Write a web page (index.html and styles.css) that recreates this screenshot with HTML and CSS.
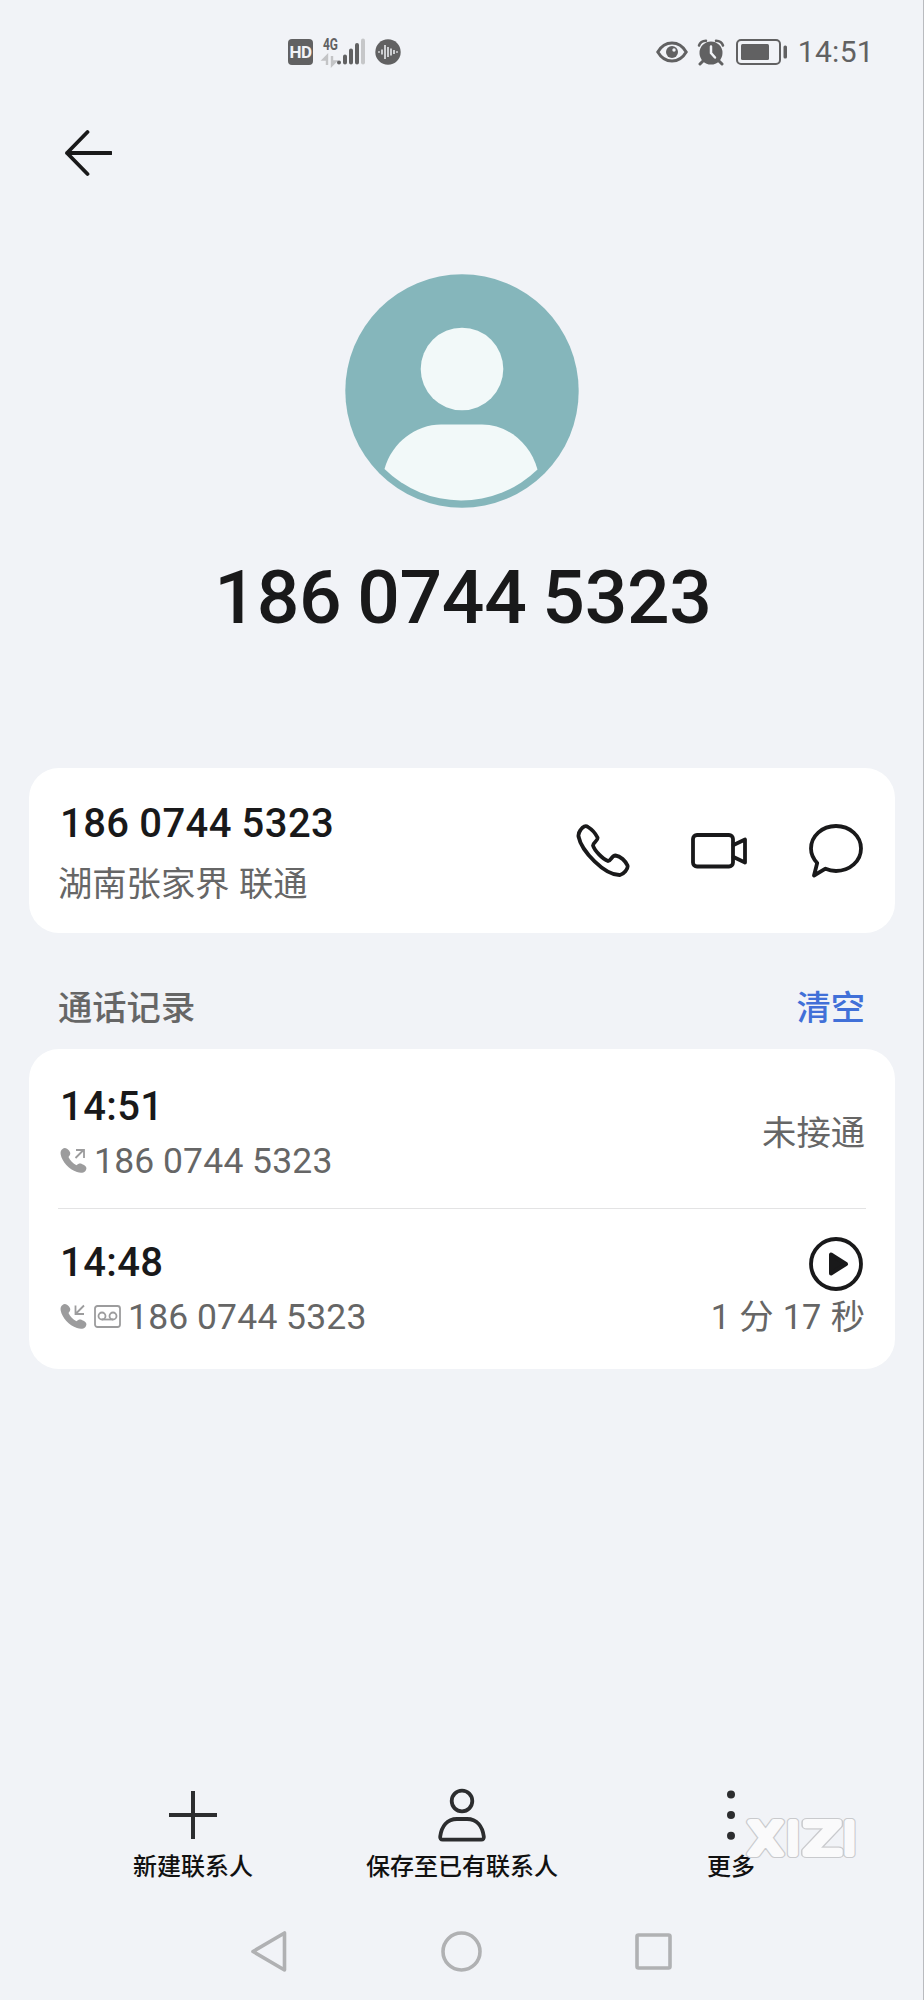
FILE: index.html
```html
<!DOCTYPE html>
<html lang="zh-CN">
<head>
  <meta charset="UTF-8" />
  <meta name="viewport" content="width=device-width, initial-scale=1.0"/>
  <title>联系人详情</title>
  <link rel="stylesheet" href="styles.css">
</head>
<body>
  <!-- 状态栏 -->
  <header class="status">
    <div class="status-left">
      <span class="hd">HD</span>
      <svg class="signal" width="44" height="36" viewBox="0 -3 44 36">
        <text class="net" x="1" y="13" textLength="15" lengthAdjust="spacingAndGlyphs">4G</text>
        <path d="M5 28V19L1.500 22.500H5M10 19v9l3.500-3.500H10" fill="none" stroke="#c3c4c6" stroke-width="2.400"/>
        <g stroke="#616162" stroke-width="4" stroke-linecap="round">
          <path d="M17 25.400v.2M23 19.500v6M29 13.500v12M35 8v17.500"/>
          <path d="M41 3.500v22" stroke="#c6c7c9"/>
        </g>
      </svg>
      <svg class="voice" width="26" height="26" viewBox="0 0 26 26">
        <circle cx="13" cy="13" r="12.700" fill="#616162"/>
        <path d="M4 12.300v1.400M7 10.500v5M10 6v14M13 8v10M16 9.500v7M19 11v4M22 12.300v1.400" stroke="#f1f3f7" stroke-width="1.500"/>
      </svg>
    </div>
    <div class="status-right">
      <svg width="32" height="22" viewBox="0 0 32 22">
        <path d="M1.800 11C5 5.500 10 2 16 2s11 3.500 14.200 9C27 16.500 22 20 16 20S5 16.500 1.800 11z" fill="none" stroke="#616162" stroke-width="3"/>
        <circle cx="16" cy="11" r="6" fill="#616162"/>
        <circle cx="18" cy="9" r="1.700" fill="#f1f3f7"/>
      </svg>
      <svg class="alarm" width="28" height="27" viewBox="0 0 28 27">
        <circle cx="14" cy="14" r="11.500" fill="#616162"/>
        <path d="M2 6.500Q3.500 2 9 1.700M26 6.500Q24.500 2 19 1.700" fill="none" stroke="#616162" stroke-width="2.500" stroke-linecap="round"/>
        <path d="M6 22l-3 3M22 22l3 3" stroke="#616162" stroke-width="3" stroke-linecap="round"/>
        <path d="M14 7.500V14l4 4.500" fill="none" stroke="#f1f3f7" stroke-width="2.500" stroke-linecap="round"/>
      </svg>
      <svg class="battery" width="52" height="26" viewBox="0 0 52 26">
        <rect x="1" y="1" width="43" height="24" rx="4" fill="none" stroke="#616162" stroke-width="2"/>
        <rect x="5" y="5" width="28" height="16" rx="1.500" fill="#616162"/>
        <rect x="47.500" y="6.500" width="3.500" height="13" rx="1.500" fill="#616162"/>
      </svg>
      <span class="clock">14:51</span>
    </div>
  </header>

  <div class="appbar">
    <svg width="48" height="48" viewBox="0 0 48 48">
      <path d="M23.500 3L3 24l20.500 21M3 24h44" class="line"/>
    </svg>
  </div>

  <!-- 头像和号码 -->
  <section class="profile">
    <svg width="234" height="234" viewBox="0 0 234 234">
      <circle cx="117" cy="117" r="116.700" fill="#85b6bb"/>
      <circle cx="117" cy="95" r="41.300" fill="#f2f9f9"/>
      <path d="M39.500 195C47 168 71 150.500 96 150.500h41c25 0 48 18 55.500 45A109.500 109.500 0 0 1 39.500 195z" fill="#f2f9f9"/>
    </svg>
    <h1>186 0744 5323</h1>
  </section>

  <main>
    <section class="card contact">
      <div>
        <div class="number">186 0744 5323</div>
        <div class="place">湖南张家界 联通</div>
      </div>
      <div class="actions">
        <svg width="54" height="54" viewBox="0 0 54 54">
          <path d="M4.500 6C7 2.500 9.500 1.200 12 3c4 2.500 7.500 6.500 9.500 10.500 1 3-4.500 5-4.500 8 1.500 5 9.500 13.500 15 15.500 3 0 3.500-5.500 7.500-5.500 5 .5 10 5.500 12 10 1 3.500-4 8.500-7.500 9.500C28.500 51.500 5.500 27 2.500 12.500c-.3-2.500.5-4.500 2-6.500z" class="line"/>
        </svg>
        <svg width="57" height="36" viewBox="0 0 57 36">
          <rect x="2" y="2" width="40" height="31.500" rx="4" class="line"/>
          <path d="M42.500 12L54 6.500v23L42.500 24" class="line"/>
        </svg>
        <svg width="54" height="54" viewBox="0 0 54 54">
          <path d="M27 2c14 0 25 10 25 22.500S41 47 27 47c-4 0-7-.7-10.500-2.300L5 51.500l3.200-12.500C4 34.500 2 30 2 24.500 2 12 13 2 27 2z" class="line"/>
        </svg>
      </div>
    </section>

    <div class="section-title">
      <span>通话记录</span>
      <a>清空</a>
    </div>

    <section class="card">
      <div class="call first">
        <div>
          <div class="time">14:51</div>
          <div class="detail">
            <svg width="27" height="27" viewBox="0 0 27 27">
              <path d="M2.500 2C4.500.3 7 1 9 3.500c2 2.500 1.700 4-.5 6.500 1.500 3.500 4.500 6.500 8 8.200 2.500-2.500 4.500-2.200 7.500-.2 3 2 3 4 1.200 6.200-2 2-5 2-8.200.8C9 22.500 2 14.500.7 7.500.3 5 .8 3.300 2.500 2z" fill="#9c9c9d"/>
              <path d="M15.500 11l8-8M16 3h8v8" class="arrow"/>
            </svg>
            <span>186 0744 5323</span>
          </div>
        </div>
        <div class="result">未接通</div>
      </div>
      <div class="call">
        <div>
          <div class="time">14:48</div>
          <div class="detail">
            <svg width="27" height="27" viewBox="0 0 27 27">
              <path d="M2.500 2C4.500.3 7 1 9 3.500c2 2.500 1.700 4-.5 6.500 1.500 3.500 4.500 6.500 8 8.200 2.500-2.500 4.500-2.200 7.500-.2 3 2 3 4 1.200 6.200-2 2-5 2-8.200.8C9 22.500 2 14.500.7 7.500.3 5 .8 3.300 2.500 2z" fill="#9c9c9d"/>
              <path d="M24 2.500l-8 8M15.500 2.500v8.500H24" class="arrow"/>
            </svg>
            <svg width="27" height="23" viewBox="0 0 27 23">
              <rect x="1" y="1" width="25" height="21" rx="2.500" class="arrow"/>
              <circle cx="8" cy="11" r="3.500" class="arrow"/>
              <circle cx="19" cy="11" r="3.500" class="arrow"/>
              <path d="M8 14.500h11" class="arrow"/>
            </svg>
            <span>186 0744 5323</span>
          </div>
        </div>
        <div class="result with-play">
          <svg width="54" height="54" viewBox="0 0 54 54">
            <circle cx="27" cy="27" r="25" class="line"/>
            <path d="M22 17.500v19L37 27z" fill="#19191a" stroke="#19191a" stroke-width="4" stroke-linejoin="round"/>
          </svg>
          <div>1 分 17 秒</div>
        </div>
      </div>
    </section>
  </main>

  <footer>
    <div class="toolbar">
      <div class="tool">
        <svg width="54" height="54" viewBox="0 0 54 54"><path d="M27 3v48M3 27h48" stroke="#2c2d2f" stroke-width="4"/></svg>
        <span>新建联系人</span>
      </div>
      <div class="tool">
        <svg width="54" height="54" viewBox="0 0 54 54">
          <g fill="none" stroke="#2c2d2f" stroke-width="3.800">
            <circle cx="27" cy="13" r="10.300"/>
            <path d="M22 31h10c10 0 15.500 7.500 16.800 17.500.3 2-.7 3.200-2.500 3.200H7.700c-1.800 0-2.800-1.200-2.500-3.200C6.500 38.500 12 31 22 31z"/>
          </g>
        </svg>
        <span>保存至已有联系人</span>
      </div>
      <div class="tool">
        <svg width="54" height="54" viewBox="0 0 54 54" fill="#2c2d2f">
          <circle cx="27" cy="6.500" r="4"/><circle cx="27" cy="27" r="4"/><circle cx="27" cy="47.800" r="4"/>
        </svg>
        <span>更多</span>
      </div>
    </div>
    <!-- 系统导航键 -->
    <div class="nav">
      <svg width="42" height="42" viewBox="0 0 42 42"><path d="M35.500 3v37L4 21.500z"/></svg>
      <svg width="42" height="42" viewBox="0 0 42 42"><circle cx="20.500" cy="21.500" r="18.500"/></svg>
      <svg width="42" height="42" viewBox="0 0 42 42"><rect x="4" y="5" width="33" height="33" rx="1.500"/></svg>
    </div>
  </footer>

  <svg class="watermark" width="124" height="54" viewBox="0 0 124 54">
    <g class="wm-edge">
      <text x="8" y="42" textLength="33" lengthAdjust="spacingAndGlyphs">X</text>
      <text x="46" y="42">I</text>
      <text x="63" y="42" textLength="37" lengthAdjust="spacingAndGlyphs">Z</text>
      <text x="102.500" y="42">I</text>
    </g>
    <g class="wm-fill">
      <text x="8" y="42" textLength="33" lengthAdjust="spacingAndGlyphs">X</text>
      <text x="46" y="42">I</text>
      <text x="63" y="42" textLength="37" lengthAdjust="spacingAndGlyphs">Z</text>
      <text x="102.500" y="42">I</text>
    </g>
  </svg>
</body>
</html>
```

FILE: styles.css
```css
* {
  box-sizing: border-box;
}

html, body {
  margin: 0;
  padding: 0;
}

body {
  position: relative;
  display: flex;
  flex-direction: column;
  width: 924px;
  height: 2000px;
  overflow: hidden;
  background: #f1f3f7;
  box-shadow: inset -1px 0 #b9bbbf;
  color: #19191a;
  font-family: Roboto, "Noto Sans CJK SC", sans-serif;
}

svg {
  display: block;
  flex: none;
}

.line {
  fill: none;
  stroke: #19191a;
  stroke-width: 3.8;
  stroke-linecap: round;
  stroke-linejoin: round;
}

.arrow {
  fill: none;
  stroke: #9c9c9d;
  stroke-width: 1.8;
}

/* 状态栏 */
.status {
  display: flex;
  justify-content: space-between;
  align-items: center;
  height: 104px;
  padding: 0 50px 0 288px;
  color: #616162;
}

.status-left, .status-right {
  display: flex;
  align-items: center;
}

.hd {
  width: 25px;
  height: 26px;
  border-radius: 4px;
  background: #616162;
  color: #f1f3f7;
  font-size: 17px;
  font-weight: 700;
  line-height: 27px;
  letter-spacing: -0.5px;
  text-align: center;
}

.signal {
  margin-left: 9px;
  overflow: visible;
}

.net {
  font-size: 17px;
  font-weight: 700;
  fill: #616162;
}

.voice {
  margin-left: 9px;
}

.alarm {
  margin-left: 9px;
}

.battery {
  margin-left: 11px;
}

.clock {
  margin-left: 10px;
  font-size: 30px;
  line-height: 40px;
  letter-spacing: 0.3px;
}

.appbar {
  display: flex;
  align-items: center;
  height: 98px;
  padding-left: 64px;
}

.profile {
  display: flex;
  flex-direction: column;
  align-items: center;
  height: 566px;
  padding-top: 72px;
}

.profile h1 {
  margin: 43px 0 0;
  padding-left: 2px;
  font-size: 75px;
  font-weight: 500;
  line-height: 92px;
  letter-spacing: -0.3px;
  word-spacing: -2.5px;
}

main {
  padding: 0 29px;
}

.card {
  border-radius: 30px;
  background: #fff;
  padding: 0 29px;
}

.contact {
  display: flex;
  justify-content: space-between;
  align-items: center;
  height: 165px;
}

.number {
  padding: 6px 0 0 2px;
  font-size: 40px;
  font-weight: 500;
  line-height: 60px;
  letter-spacing: 0.4px;
  word-spacing: -0.5px;
}

.place {
  font-size: 34.3px;
  line-height: 60px;
  word-spacing: 1px;
  color: #666;
}

.actions {
  display: flex;
  align-items: center;
  gap: 61px;
  padding-right: 3px;
}

.section-title {
  display: flex;
  justify-content: space-between;
  height: 116px;
  padding: 50px 30px 0 29px;
  font-size: 34.3px;
  font-weight: 500;
  line-height: 50px;
  color: #666;
}

.section-title a {
  color: #4170d8;
}

.call {
  display: flex;
  justify-content: space-between;
  align-items: center;
  height: 161px;
}

.call.first {
  height: 159px;
  padding-top: 9px;
}

.call + .call {
  border-top: 1px solid #e3e3e4;
}

.time {
  padding-left: 2px;
  font-size: 40px;
  font-weight: 500;
  line-height: 55px;
  letter-spacing: 0.4px;
}

.detail {
  display: flex;
  align-items: center;
  gap: 7px;
  padding-left: 2px;
  font-size: 35.5px;
  line-height: 54px;
  letter-spacing: 0.2px;
  word-spacing: -0.5px;
  color: #666;
}

.result {
  display: flex;
  flex-direction: column;
  align-items: flex-end;
  padding-right: 1px;
  font-size: 34.3px;
  line-height: 52px;
  word-spacing: 0.8px;
  color: #666;
}

.with-play {
  padding-top: 2px;
}

.with-play svg {
  margin-right: 2px;
}

footer {
  margin-top: auto;
}

.toolbar {
  display: grid;
  grid-template-columns: repeat(3, 269px);
  justify-content: center;
  height: 113px;
}

.tool {
  display: flex;
  flex-direction: column;
  align-items: center;
  font-size: 24px;
  font-weight: 500;
  line-height: 51px;
  color: #111;
}

.nav {
  display: grid;
  grid-template-columns: repeat(3, 192px);
  justify-content: center;
  justify-items: center;
  align-items: center;
  height: 99px;
  fill: none;
  stroke: #b0b1b3;
  stroke-width: 3.6;
  stroke-linejoin: round;
}

/* 右下角水印 */
.watermark {
  position: absolute;
  left: 741px;
  top: 1812px;
  font-family: Roboto, sans-serif;
  font-size: 43.6px;
  stroke-linejoin: round;
}

.wm-edge {
  fill: #c9cacd;
  stroke: #c9cacd;
  stroke-width: 8;
}

.wm-fill {
  fill: #fafafb;
  stroke: #fafafb;
  stroke-width: 5.8;
}
```
